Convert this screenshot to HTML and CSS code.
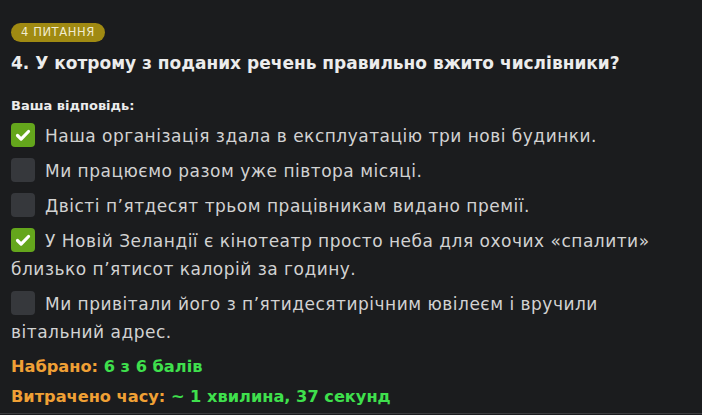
FILE: index.html
```html
<!DOCTYPE html>
<html lang="uk">
<head>
<meta charset="utf-8">
<link rel="stylesheet" href="styles.css">
</head>
<body>
<div class="card">
  <div class="badge">4 питання</div>
  <h2 class="question">4. У котрому з поданих речень правильно вжито числівники?</h2>
  <div class="label">Ваша відповідь:</div>
  <ul class="options">
    <li class="option"><span class="box checked"><svg viewBox="0 0 24 24" width="24" height="24"><path d="M6.5 12.5l3.6 3.6 7.4-7.6" fill="none" stroke="#fff" stroke-width="3.2" stroke-linecap="round" stroke-linejoin="round"/></svg></span>Наша організація здала в експлуатацію три нові будинки.</li>
    <li class="option"><span class="box"></span>Ми працюємо разом уже півтора місяці.</li>
    <li class="option"><span class="box"></span>Двісті п’ятдесят трьом працівникам видано премії.</li>
    <li class="option"><span class="box checked"><svg viewBox="0 0 24 24" width="24" height="24"><path d="M6.5 12.5l3.6 3.6 7.4-7.6" fill="none" stroke="#fff" stroke-width="3.2" stroke-linecap="round" stroke-linejoin="round"/></svg></span>У Новій Зеландії є кінотеатр просто неба для охочих «спалити» близько п’ятисот калорій за годину.</li>
    <li class="option"><span class="box"></span>Ми привітали його з п’ятидесятирічним ювілеєм і вручили вітальний адрес.</li>
  </ul>
  <div class="stat first"><span class="key">Набрано:</span> <span class="val">6 з 6 балів</span></div>
  <div class="stat"><span class="key">Витрачено часу:</span> <span class="val">~ 1 хвилина, 37 секунд</span></div>
</div>
</body>
</html>
```
FILE: styles.css
```css
html, body {
  margin: 0;
  padding: 0;
  background: #1b1c1e;
}
body {
  font-family: "DejaVu Sans", "Open Sans", sans-serif;
  color: #e6e6e6;
  width: 702px;
  height: 415px;
  overflow: hidden;
}
.card {
  padding: 21px 11px 0 11px;
  border-bottom: 1px solid #3a3b3e;
  height: 392px;
}
.badge {
  display: inline-block;
  background: #a08a12;
  color: #f1ecd0;
  font-size: 11.5px;
  letter-spacing: 0.6px;
  text-transform: uppercase;
  line-height: 19px;
  height: 19px;
  padding: 0 10px;
  border-radius: 10px;
}
.question {
  margin: 9px 0 0 0;
  font-size: 17px;
  font-weight: 700;
  line-height: 24px;
  color: #ececec;
}
.label {
  margin-top: 22px;
  font-size: 13px;
  font-weight: 700;
  line-height: 18px;
  color: #ececec;
}
.options {
  list-style: none;
  margin: 7px 0 6px 0;
  padding: 0;
  max-width: 660px;
}
.option {
  font-size: 17px;
  letter-spacing: 0.5px;
  line-height: 28px;
  color: #d2d2d2;
  margin-bottom: 7px;
}
.option:last-child {
  margin-bottom: 0;
}
.box {
  display: inline-block;
  vertical-align: -5px;
  width: 24px;
  height: 24px;
  border-radius: 4px;
  background: #36383c;
  margin-right: 10px;
}
.box.checked {
  background: #64a61c;
}
.box svg {
  display: block;
}
.stat {
  font-size: 16.2px;
  font-weight: 700;
  line-height: 30px;
}
.key {
  color: #f0a035;
}
.val {
  color: #3fe04d;
}
```
